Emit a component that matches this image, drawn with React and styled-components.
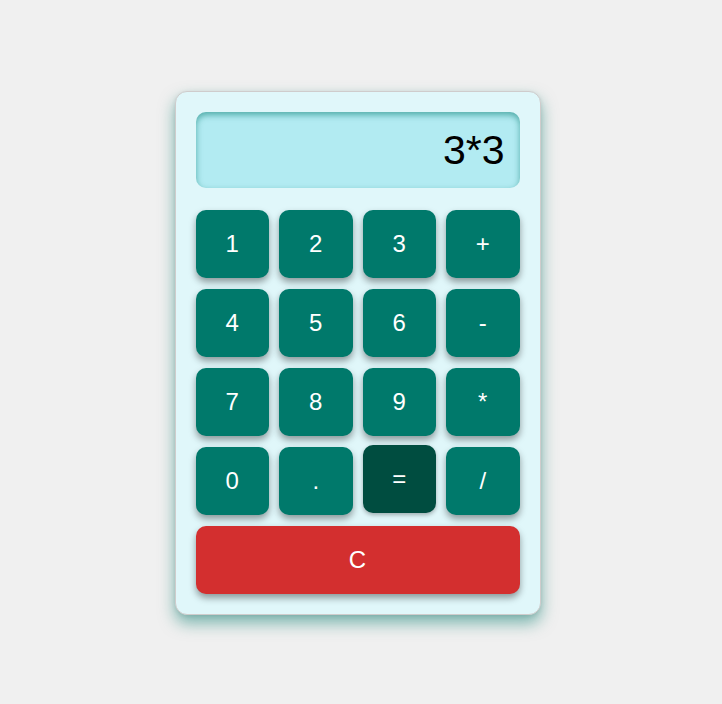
import React, { useState } from "react";
import styled, { createGlobalStyle } from "styled-components";

const GlobalStyle = createGlobalStyle`
  html, body {
    margin: 0;
    padding: 0;
    background: #f0f0f0;
    font-family: "Liberation Sans", Arial, sans-serif;
  }
`;

const Page = styled.div`
  min-height: 100vh;
  display: flex;
  justify-content: center;
  align-items: center;
  padding-right: 7px;
  padding-top: 2px;
  box-sizing: border-box;
`;

const Card = styled.div`
  width: 366px;
  box-sizing: border-box;
  padding: 20px;
  background: #e0f7fa;
  border: 1px solid #cfcccc;
  border-radius: 12px;
  box-shadow: 0 1px 4px rgba(0, 0, 0, 0.08), 0 8px 16px rgba(0, 121, 107, 0.5);
`;

const Display = styled.div`
  height: 76px;
  box-sizing: border-box;
  background: #b2ebf2;
  border-radius: 10px;
  box-shadow: inset 0 3px 6px rgba(0, 121, 107, 0.55);
  display: flex;
  align-items: center;
  justify-content: flex-end;
  padding: 0 15px 0 0;
  font-size: 41px;
  color: #000;
  margin-bottom: 22px;
`;

const Keys = styled.div`
  display: grid;
  grid-template-columns: repeat(4, 1fr);
  column-gap: 10px;
  row-gap: 11px;
`;

const Key = styled.button`
  height: 68px;
  border: none;
  border-radius: 10px;
  font-family: "Liberation Sans", Arial, sans-serif;
  font-size: 24px;
  color: #fff;
  cursor: pointer;
  background: ${(p) => (p.$clear ? "#d32f2f" : p.$active ? "#004d40" : "#00796b")};
  grid-column: ${(p) => (p.$wide ? "1 / -1" : "auto")};
  box-shadow: ${(p) =>
    p.$active ? "0 2px 4px rgba(0, 0, 0, 0.3)" : "0 4px 7px rgba(0, 0, 0, 0.38)"};
  transform: ${(p) => (p.$active ? "translateY(-2px)" : "none")};
`;

const layout = ["1", "2", "3", "+", "4", "5", "6", "-", "7", "8", "9", "*", "0", ".", "=", "/"];

export default function App() {
  const [expr, setExpr] = useState("3*3");

  const press = (k) => {
    if (k === "=") return;
    setExpr((e) => e + k);
  };

  return (
    <>
      <GlobalStyle />
      <Page>
        <Card>
          <Display>{expr}</Display>
          <Keys>
            {layout.map((k) => (
              <Key key={k} $active={k === "="} onClick={() => press(k)}>
                {k}
              </Key>
            ))}
            <Key $wide $clear onClick={() => setExpr("")}>
              C
            </Key>
          </Keys>
        </Card>
      </Page>
    </>
  );
}
